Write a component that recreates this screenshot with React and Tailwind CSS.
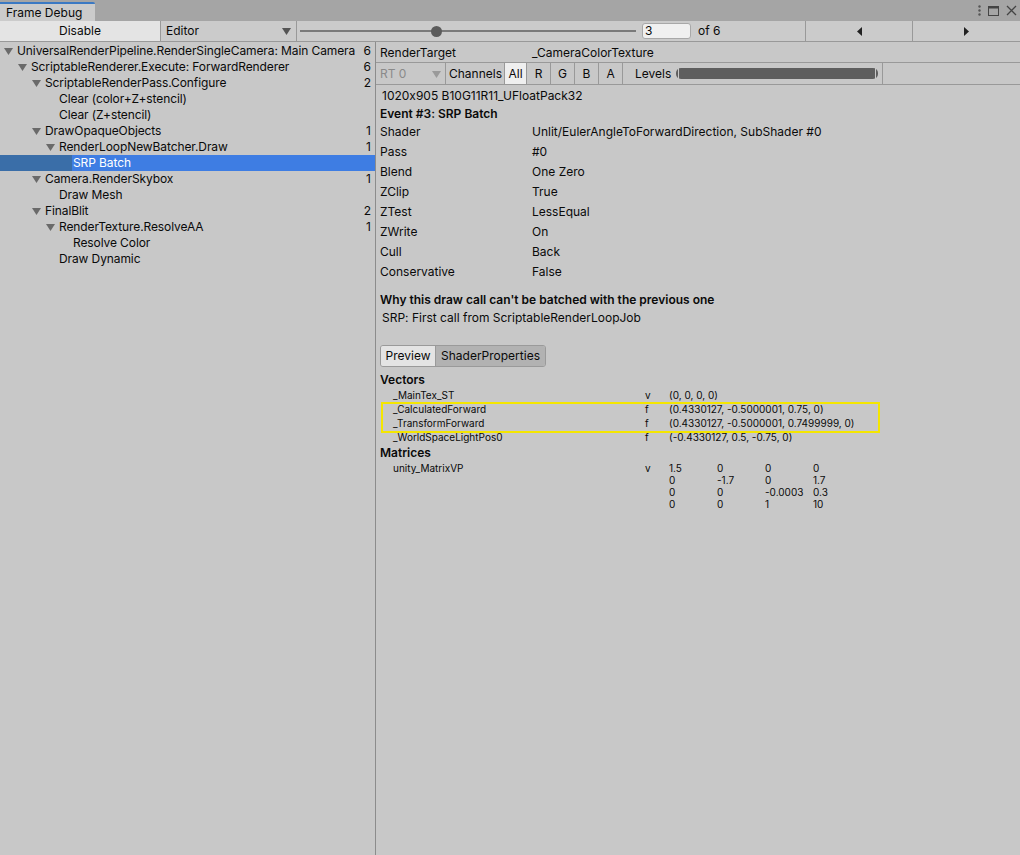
import React from 'react';

const tree = [
  { label: 'UniversalRenderPipeline.RenderSingleCamera: Main Camera', level: 0, arrow: true, count: 6 },
  { label: 'ScriptableRenderer.Execute: ForwardRenderer', level: 1, arrow: true, count: 6 },
  { label: 'ScriptableRenderPass.Configure', level: 2, arrow: true, count: 2 },
  { label: 'Clear (color+Z+stencil)', level: 3 },
  { label: 'Clear (Z+stencil)', level: 3 },
  { label: 'DrawOpaqueObjects', level: 2, arrow: true, count: 1 },
  { label: 'RenderLoopNewBatcher.Draw', level: 3, arrow: true, count: 1 },
  { label: 'SRP Batch', level: 4, selected: true },
  { label: 'Camera.RenderSkybox', level: 2, arrow: true, count: 1 },
  { label: 'Draw Mesh', level: 3 },
  { label: 'FinalBlit', level: 2, arrow: true, count: 2 },
  { label: 'RenderTexture.ResolveAA', level: 3, arrow: true, count: 1 },
  { label: 'Resolve Color', level: 4 },
  { label: 'Draw Dynamic', level: 3 },
];

const states = [
  ['Shader', 'Unlit/EulerAngleToForwardDirection, SubShader #0'],
  ['Pass', '#0'],
  ['Blend', 'One Zero'],
  ['ZClip', 'True'],
  ['ZTest', 'LessEqual'],
  ['ZWrite', 'On'],
  ['Cull', 'Back'],
  ['Conservative', 'False'],
];

const vectors = [
  ['_MainTex_ST', 'v', '(0, 0, 0, 0)'],
  ['_CalculatedForward', 'f', '(0.4330127, -0.5000001, 0.75, 0)'],
  ['_TransformForward', 'f', '(0.4330127, -0.5000001, 0.7499999, 0)'],
  ['_WorldSpaceLightPos0', 'f', '(-0.4330127, 0.5, -0.75, 0)'],
];

const matrix = [
  ['1.5', '0', '0', '0'],
  ['0', '-1.7', '0', '1.7'],
  ['0', '0', '-0.0003', '0.3'],
  ['0', '0', '1', '10'],
];

const Down = ({ color = '#5a5a5a' }) => (
  <svg width="9" height="8" viewBox="0 0 9 8"><polygon points="0,1 9,1 4.5,8" fill={color} /></svg>
);

const TreeRow = ({ row }) => (
  <div className={`relative h-4 flex items-center pr-[4px] ${row.selected ? 'bg-[#3e7de3] text-white' : ''}`}>
    {row.selected && <div className="absolute left-0 top-0 h-4 w-[72px] bg-[#3a6ea8]" />}
    <div className="relative flex items-center" style={{ paddingLeft: 4 + row.level * 14 }}>
      <div className="w-[13px] flex items-center">{row.arrow && <Down color="#6a6a6a" />}</div>
      <span className="whitespace-nowrap tracking-[-0.1px]">{row.label}</span>
    </div>
    <span className="relative ml-auto">{row.count}</span>
  </div>
);

export default function App() {
  return (
    <div className="w-[1020px] h-[855px] bg-[#c8c8c8] flex flex-col text-[12px] text-[#0a0a0a] overflow-hidden [font-feature-settings:'calt'_0]" style={{ fontFamily: 'Inter, "Noto Sans", sans-serif' }}>
      {/* title bar */}
      <div className="h-[21px] bg-[#a5a5a5] flex items-end shrink-0">
        <div className="h-[19px] w-[95px] bg-[#cbcbcb] border-t-2 border-[#3b79c3] flex items-center pl-[6px] rounded-tr-[2px]">Frame Debug</div>
        <div className="ml-auto h-[21px] flex items-center gap-[7px] pr-[3px] text-[#444]">
          <svg width="3" height="11" viewBox="0 0 3 11"><circle cx="1.5" cy="1.5" r="1.2" fill="#555" /><circle cx="1.5" cy="5.5" r="1.2" fill="#555" /><circle cx="1.5" cy="9.5" r="1.2" fill="#555" /></svg>
          <svg width="11" height="10" viewBox="0 0 11 10"><rect x="0.5" y="0.5" width="10" height="9" fill="none" stroke="#444" /><rect x="0.5" y="0.5" width="10" height="2" fill="#444" /></svg>
          <svg width="11" height="11" viewBox="0 0 11 11"><path d="M1 1 L10 10 M10 1 L1 10" stroke="#444" strokeWidth="1.3" /></svg>
        </div>
      </div>

      {/* toolbar */}
      <div className="h-[21px] bg-[#cbcbcb] border-b border-[#999] flex items-stretch shrink-0">
        <div className="w-[161px] bg-[#e4e4e4] border-r border-[#999] flex items-center justify-center">Disable</div>
        <div className="w-[136px] border-r border-[#999] flex items-center pl-[5px] pr-[5px]">
          <span>Editor</span>
          <div className="ml-auto"><Down color="#555" /></div>
        </div>
        <div className="w-[339px] relative flex items-center pl-[3px]">
          <div className="h-[2px] w-[336px] bg-[#7a7a7a]" />
          <div className="absolute left-[134px] w-[11px] h-[11px] rounded-full bg-[#5b5b5b]" />
        </div>
        <div className="flex items-center pl-[6px]">
          <div className="w-[49px] h-[16px] bg-[#f0f0f0] border border-[#a8a8a8] rounded-[3px] flex items-center pl-[2px]">3</div>
          <span className="ml-[7px]">of 6</span>
        </div>
        <div className="w-[107px] ml-auto border-l border-[#999] flex items-center justify-center">
          <svg width="5" height="9" viewBox="0 0 5 9"><polygon points="5,0 5,9 0,4.5" fill="#222" /></svg>
        </div>
        <div className="w-[108px] border-l border-[#999] flex items-center justify-center">
          <svg width="5" height="9" viewBox="0 0 5 9"><polygon points="0,0 0,9 5,4.5" fill="#222" /></svg>
        </div>
      </div>

      <div className="flex flex-1 min-h-0">
        {/* tree */}
        <div className="w-[376px] border-r border-[#8c8c8c] pt-[1px] shrink-0">
          {tree.map((r, i) => <TreeRow key={i} row={r} />)}
        </div>

        {/* details */}
        <div className="flex-1 flex flex-col">
          <div className="h-[21px] border-b border-[#999] flex items-center pl-[4px] pt-[1px]">
            <span className="w-[152px]">RenderTarget</span>
            <span>_CameraColorTexture</span>
          </div>
          <div className="h-[22px] border-b border-[#999] flex items-stretch">
            <div className="w-[70px] border-r border-[#999] flex items-center pl-[4px] pr-[4px] text-[#8a8a8a]">
              <span>RT 0</span>
              <div className="ml-auto"><Down color="#9a9a9a" /></div>
            </div>
            <div className="flex items-center pl-[3px] pr-[2px]">Channels</div>
            <div className="w-[23px] bg-[#efefef] border-l border-r border-[#999] flex items-center justify-center">All</div>
            {['R', 'G', 'B', 'A'].map(c => (
              <div key={c} className="w-[24px] border-r border-[#999] flex items-center justify-center">{c}</div>
            ))}
            <div className="flex items-center pl-[12px] w-[260px] border-r border-[#999]">
              <span>Levels</span>
              <div className="ml-[5px] w-[202px] h-[11px] bg-[#5e5e5e] rounded-[5px] flex justify-between items-center px-[2px]">
                <div className="w-[1px] h-[11px] bg-[#c8c8c8]" />
                <div className="w-[1px] h-[11px] bg-[#c8c8c8]" />
              </div>
            </div>
          </div>

          <div className="pl-[4px]">
            <div className="h-[21px] flex items-center pl-[2px] pt-[1px]">1020x905 B10G11R11_UFloatPack32</div>
            <div className="h-[15px] flex items-center font-semibold">Event #3: SRP Batch</div>
            <div className="pt-[1px]">
              {states.map(([k, v]) => (
                <div key={k} className="h-5 flex items-center">
                  <span className="w-[152px]">{k}</span>
                  <span>{v}</span>
                </div>
              ))}
            </div>

            <div className="mt-[9px] h-[18px] flex items-center font-semibold">Why this draw call can't be batched with the previous one</div>
            <div className="h-[18px] flex items-center pl-[2px]">SRP: First call from ScriptableRenderLoopJob</div>

            <div className="mt-[18px] flex h-[22px] w-[166px] border border-[#9a9a9a] rounded-[3px] overflow-hidden">
              <div className="w-[55px] bg-[#e4e4e4] border-r border-[#9a9a9a] flex items-center justify-center">Preview</div>
              <div className="flex-1 bg-[#b2b2b2] flex items-center justify-center">ShaderProperties</div>
            </div>

            <div className="mt-[5px] h-[16px] flex items-center font-semibold">Vectors</div>
            <div className="relative text-[10px]">
              {vectors.map(([n, t, v]) => (
                <div key={n} className="h-[14px] flex items-center pl-[13px]">
                  <span className="w-[252px]">{n}</span>
                  <span className="w-[24px]">{t}</span>
                  <span>{v}</span>
                </div>
              ))}
              <div className="absolute left-[1px] top-[14px] w-[499px] h-[31px] border-2 border-[#f4e600]" />
            </div>
            <div className="mt-[1px] h-[16px] flex items-center font-semibold">Matrices</div>
            <div className="text-[10px] flex pl-[13px] pt-[1px]">
              <span className="w-[252px] h-[12px] flex items-center">unity_MatrixVP</span>
              <span className="w-[24px] h-[12px] flex items-center">v</span>
              <div>
                {matrix.map((r, i) => (
                  <div key={i} className="h-[12px] flex items-center">
                    {r.map((c, j) => <span key={j} className="w-[48px]">{c}</span>)}
                  </div>
                ))}
              </div>
            </div>
          </div>
        </div>
      </div>
    </div>
  );
}
